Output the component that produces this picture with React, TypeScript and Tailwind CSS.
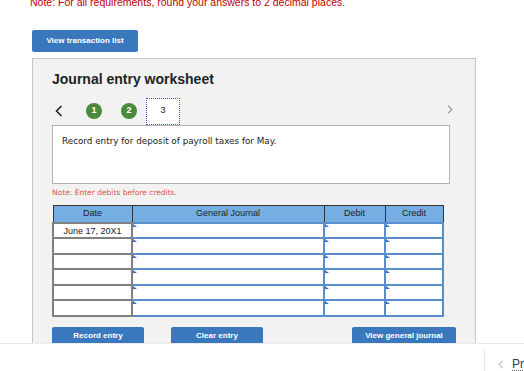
import React from 'react'

const rows = ['June 17, 20X1', '', '', '', '', '']

function InputCell({ className = '' }: { className?: string }) {
  return (
    <td className={`relative h-[15.5px] border-2 border-[#5b8ccc] bg-white p-0 ${className}`}>
      <span className="absolute left-0 top-0 h-0 w-0 border-l-[4px] border-t-[3px] border-l-[#2f6fc4] border-t-transparent" />
    </td>
  )
}

function Chevron({ dir, className }: { dir: 'left' | 'right'; className: string }) {
  return (
    <svg viewBox="0 0 8 12" className={className} fill="none" stroke="currentColor" strokeWidth="1.6">
      {dir === 'left' ? <path d="M6.5 1 L1.5 6 L6.5 11" /> : <path d="M1.5 1 L6.5 6 L1.5 11" />}
    </svg>
  )
}

export default function App() {
  return (
    <div className="relative h-[371px] w-[524px] overflow-hidden bg-white" style={{ fontFamily: '"Liberation Sans", Arial, sans-serif' }}>
      <p className="mt-[-4px] pl-[30px] text-[10.5px] leading-[13px] text-[#c00000]">
        Note: For all requirements, round your answers to 2 decimal places.
      </p>

      <button className="ml-[32px] mt-[21px] flex h-[22px] w-[106px] items-center justify-center rounded-[2px] bg-[#3a78bd] text-[8px] font-bold text-white">
        View transaction list
      </button>

      <div className="ml-[32px] mt-[6px] h-[300px] w-[444px] border border-[#c6c6c6] bg-[#f2f2f2] pl-[19px] pr-[6px]">
        <h2 className="mt-[12px] text-[14px] font-bold leading-[16px] text-[#222]">Journal entry worksheet</h2>

        <div className="mt-[10px] flex h-[28px] items-center">
          <Chevron dir="left" className="ml-[3px] h-[12px] w-[8px] text-[#222]" />
          <span className="ml-[23px] flex h-[16px] w-[16px] items-center justify-center rounded-full bg-[#4a8a3c] text-[9px] font-bold text-white">1</span>
          <span className="ml-[19px] flex h-[16px] w-[16px] items-center justify-center rounded-full bg-[#4a8a3c] text-[9px] font-bold text-white">2</span>
          <span className="ml-[9px] flex h-[27px] w-[34px] items-center justify-center border border-dotted border-[#3a5f9a] bg-white text-[9px] text-[#222]">3</span>
          <Chevron dir="right" className="ml-auto mr-[16px] mt-[-4px] h-[9px] w-[6px] text-[#9a9a9a]" />
        </div>

        <div className="h-[59px] w-[398px] border border-[#b3b3b3] bg-white px-[9px] pt-[9px] text-[8.8px] text-[#222]" style={{ fontFamily: 'Tahoma, "DejaVu Sans", sans-serif' }}>
          Record entry for deposit of payroll taxes for May.
        </div>

        <p className="mt-[3px] text-[7.5px] text-[#d9534f]" style={{ fontFamily: '"DejaVu Sans", sans-serif' }}>
          Note: Enter debits before credits.
        </p>

        <table className="mt-[7px] w-[390px] table-fixed border-collapse text-[9px] text-[#222]">
          <colgroup>
            <col className="w-[79px]" />
            <col className="w-[192px]" />
            <col className="w-[61px]" />
            <col className="w-[58px]" />
          </colgroup>
          <thead>
            <tr className="h-[17px] bg-[#75aee2]">
              <th className="border border-[#333] font-normal">Date</th>
              <th className="border border-[#333] font-normal">General Journal</th>
              <th className="border border-[#333] font-normal">Debit</th>
              <th className="border border-[#333] font-normal">Credit</th>
            </tr>
          </thead>
          <tbody>
            {rows.map((d, i) => (
              <tr key={i} className="h-[15.5px]">
                <td className="border-2 border-[#808080] bg-white p-0 text-center leading-[12px]">{d}</td>
                <InputCell />
                <InputCell />
                <InputCell />
              </tr>
            ))}
          </tbody>
        </table>

        <div className="mt-[10px] flex text-[8px] font-bold text-white">
          <button className="flex h-[18px] w-[92px] shrink-0 items-center justify-center rounded-t-[2px] bg-[#3a78bd]">Record entry</button>
          <button className="ml-[27px] flex h-[18px] w-[92px] shrink-0 items-center justify-center rounded-t-[2px] bg-[#3a78bd]">Clear entry</button>
          <button className="ml-[89px] flex h-[18px] w-[104px] shrink-0 items-center justify-center rounded-t-[2px] bg-[#3a78bd]">View general journal</button>
        </div>
      </div>

      <div className="absolute bottom-0 left-0 right-0 top-[343px] border-t border-[#ebebeb] bg-white">
        <div className="absolute left-[484px] top-[5px] h-[30px] w-px bg-[#e6e6e6]" />
        <div className="absolute left-[498px] top-[14px] flex items-center gap-[8px] text-[12px]">
          <Chevron dir="left" className="h-[9px] w-[6px] text-[#b8c8e0]" />
          <span className="border-b border-dotted border-[#555] leading-[12px] text-[#1f3a6a]">Prev</span>
        </div>
      </div>
    </div>
  )
}
